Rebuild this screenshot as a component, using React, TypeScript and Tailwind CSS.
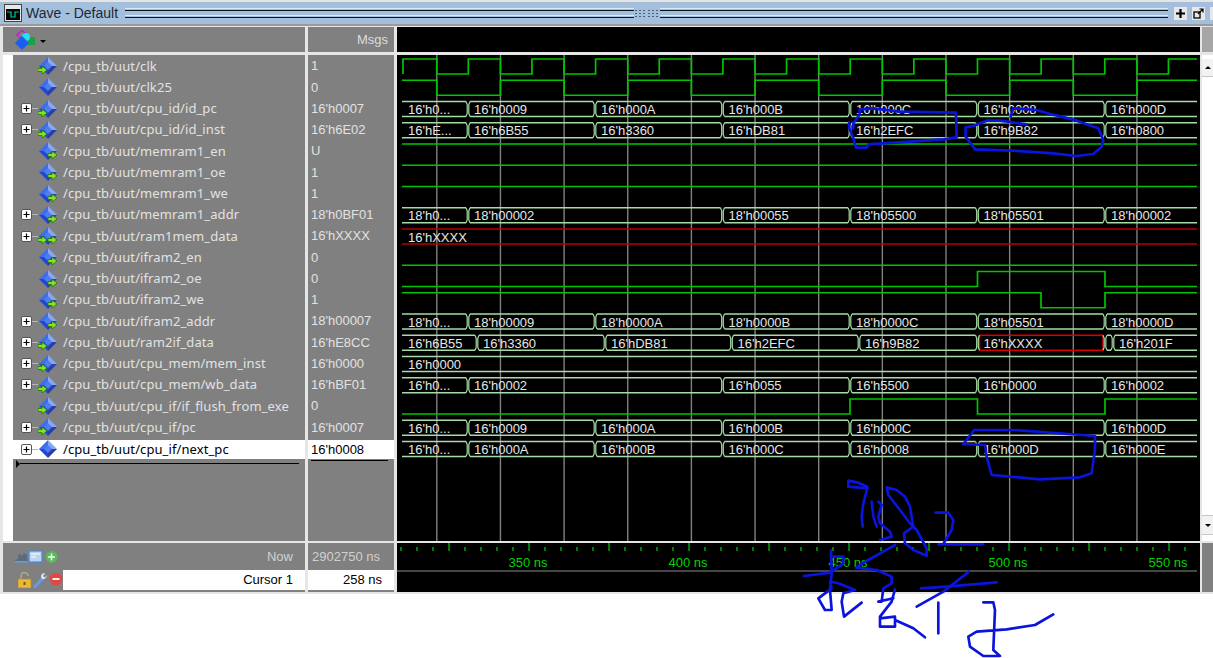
const ROW_H = 21.25;
const rowTop = (i: number) => 59 + i * ROW_H;

const GREEN = "#00c400";
const BUS = "#a6dca6";
const RED = "#b80000";

type Kind = "in" | "out" | "both" | "none";

const signals: { name: string; value: string; kind: Kind; expand?: boolean }[] = [
  { name: "/cpu_tb/uut/clk", value: "1", kind: "in" },
  { name: "/cpu_tb/uut/clk25", value: "0", kind: "none" },
  { name: "/cpu_tb/uut/cpu_id/id_pc", value: "16'h0007", kind: "in", expand: true },
  { name: "/cpu_tb/uut/cpu_id/id_inst", value: "16'h6E02", kind: "in", expand: true },
  { name: "/cpu_tb/uut/memram1_en", value: "U", kind: "out" },
  { name: "/cpu_tb/uut/memram1_oe", value: "1", kind: "out" },
  { name: "/cpu_tb/uut/memram1_we", value: "1", kind: "out" },
  { name: "/cpu_tb/uut/memram1_addr", value: "18'h0BF01", kind: "out", expand: true },
  { name: "/cpu_tb/uut/ram1mem_data", value: "16'hXXXX", kind: "both", expand: true },
  { name: "/cpu_tb/uut/ifram2_en", value: "0", kind: "out" },
  { name: "/cpu_tb/uut/ifram2_oe", value: "0", kind: "out" },
  { name: "/cpu_tb/uut/ifram2_we", value: "1", kind: "out" },
  { name: "/cpu_tb/uut/ifram2_addr", value: "18'h00007", kind: "out", expand: true },
  { name: "/cpu_tb/uut/ram2if_data", value: "16'hE8CC", kind: "in", expand: true },
  { name: "/cpu_tb/uut/cpu_mem/mem_inst", value: "16'h0000", kind: "in", expand: true },
  { name: "/cpu_tb/uut/cpu_mem/wb_data", value: "16'hBF01", kind: "in", expand: true },
  { name: "/cpu_tb/uut/cpu_if/if_flush_from_exe", value: "0", kind: "in" },
  { name: "/cpu_tb/uut/cpu_if/pc", value: "16'h0007", kind: "in", expand: true },
  { name: "/cpu_tb/uut/cpu_if/next_pc", value: "16'h0008", kind: "none", expand: true },
];

const T = [468, 595, 722.5, 850, 977.5, 1105];
const TA = [468, 722.5, 850, 977.5, 1105];

// row index, label list, transition x positions
const buses: { row: number; at: number[]; labels: string[]; color?: string }[] = [
  { row: 2, at: T, labels: ["16'h0...", "16'h0009", "16'h000A", "16'h000B", "16'h000C", "16'h0008", "16'h000D"] },
  { row: 3, at: T, labels: ["16'hE...", "16'h6B55", "16'h3360", "16'hDB81", "16'h2EFC", "16'h9B82", "16'h0800"] },
  { row: 7, at: TA, labels: ["18'h0...", "18'h00002", "18'h00055", "18'h05500", "18'h05501", "18'h00002"] },
  { row: 8, at: [], labels: ["16'hXXXX"], color: RED },
  { row: 12, at: T, labels: ["18'h0...", "18'h00009", "18'h0000A", "18'h0000B", "18'h0000C", "18'h05501", "18'h0000D"] },
  { row: 13, at: [477, 605, 731.5, 859, 977.5, 1105, 1113], labels: ["16'h6B55", "16'h3360", "16'hDB81", "16'h2EFC", "16'h9B82", "16'hXXXX", "", "16'h201F"] },
  { row: 14, at: [], labels: ["16'h0000"] },
  { row: 15, at: TA, labels: ["16'h0...", "16'h0002", "16'h0055", "16'h5500", "16'h0000", "16'h0002"] },
  { row: 17, at: [468, 595, 722.5, 850, 1105], labels: ["16'h0...", "16'h0009", "16'h000A", "16'h000B", "16'h000C", "16'h000D"] },
  { row: 18, at: T, labels: ["16'h0...", "16'h000A", "16'h000B", "16'h000C", "16'h0008", "16'h000D", "16'h000E"] },
];

const gridX = Array.from({ length: 12 }, (_, i) => 436.8 + i * 63.65);

function clockPath() {
  const top = rowTop(0);
  const low = top + 15;
  let d = `M403 ${low}V${top}`;
  for (let i = 0; i < 12; i++) {
    const fall = gridX[i];
    const rise = Math.min(fall + 31.5, 1197);
    d += `H${fall}V${low}H${rise}`;
    if (rise < 1197) d += `V${top}`;
  }
  return d + "H1197";
}

function clk25Path() {
  const top = rowTop(1);
  const low = top + 15;
  let d = `M402 ${top}`;
  let high = true;
  for (const x of gridX) {
    d += `H${x}V${high ? low : top}`;
    high = !high;
  }
  return d + "H1197";
}

function levelPath(row: number, startHigh: boolean, at: number[]) {
  const top = rowTop(row);
  const low = top + 15;
  let high = startHigh;
  let d = `M402 ${high ? top : low}`;
  for (const x of at) {
    high = !high;
    d += `H${x}V${high ? top : low}`;
  }
  return d + "H1197";
}

function Bus({ row, at, labels, color }: { row: number; at: number[]; labels: string[]; color?: string }) {
  const top = rowTop(row);
  const bot = top + 15;
  const edges = [402, ...at, 1197];
  return (
    <g>
      {labels.map((label, i) => {
        const a = edges[i] + (i === 0 ? 0 : 2);
        const b = edges[i + 1] - (i === labels.length - 1 ? 0 : 2);
        const isX = label === "16'hXXXX" && row === 13;
        const stroke = isX || color ? color ?? "#d80000" : BUS;
        return (
          <g key={i}>
            <path d={`M${a} ${top}H${b}M${a} ${bot}H${b}`} stroke={stroke} strokeWidth="1.5" fill="none" />
            {isX ? <path d={`M${a} ${top}V${bot}M${b} ${top}V${bot}`} stroke={stroke} strokeWidth="1.5" fill="none" /> : null}
            {label ? (
              <text x={edges[i] + 6} y={top + 12.5} fill="#e6e6e6" fontSize="13">
                {label}
              </text>
            ) : null}
          </g>
        );
      })}
      {at.map((x) => (
        <path
          key={x}
          d={`M${x - 2} ${top}L${x - 0.8} ${top + 3}V${bot - 3}L${x - 2} ${bot}M${x + 2} ${top}L${x + 0.8} ${top + 3}V${bot - 3}L${x + 2} ${bot}`}
          stroke={BUS}
          strokeWidth="1.2"
          fill="none"
        />
      ))}
    </g>
  );
}

function WaveCanvas() {
  return (
    <svg viewBox="397 55 803 486" className="block h-[486px] w-[803px]" style={{ fontFamily: "'Liberation Sans', sans-serif" }}>
      {gridX.map((x) => (
        <path key={x} d={`M${x} 55V541`} stroke="#808080" strokeWidth="1.4" />
      ))}
      <g fill="none" stroke={GREEN} strokeWidth="1.7">
        <path d={clockPath()} />
        <path d={clk25Path()} />
        <path d={levelPath(4, true, [])} />
        <path d={levelPath(5, true, [])} />
        <path d={levelPath(6, true, [])} />
        <path d={levelPath(9, false, [])} />
        <path d={levelPath(10, false, [977.5, 1105])} />
        <path d={levelPath(11, true, [1041, 1105])} />
        <path d={levelPath(16, false, [850, 977.5, 1105])} />
      </g>
      {buses.map((b) => (
        <Bus key={b.row} {...b} />
      ))}
    </svg>
  );
}

function Ruler() {
  const ticks = Array.from({ length: 50 }, (_, i) => 1009 + (i - 38) * 16).filter((x) => x > 400 && x < 1197);
  return (
    <svg viewBox="397 543 803 49" className="block h-[49px] w-[803px]" style={{ fontFamily: "'Liberation Sans', sans-serif" }}>
      {ticks.map((x) => {
        const major = (x - 1009) % 80 === 0;
        return <path key={x} d={`M${x} ${major ? 543 : 547}V551`} stroke="#00d000" strokeWidth="1.2" />;
      })}
      {["350 ns", "400 ns", "450 ns", "500 ns", "550 ns"].map((t, i) => (
        <text key={t} x={528 + i * 160} y={567} textAnchor="middle" fontSize="13" fill="#00d400">
          {t}
        </text>
      ))}
      <path d="M397 571H1197" stroke="#8a8a8a" strokeWidth="1" />
    </svg>
  );
}

function SignalIcon({ kind }: { kind: Kind }) {
  const arrow = (x: number) => (
    <polygon
      points={`${x},12.5 ${x + 4},12.5 ${x + 4},10 ${x + 9},14 ${x + 4},18 ${x + 4},15.5 ${x},15.5`}
      fill="#84e41e"
      stroke="#1c6a10"
      strokeWidth="0.7"
    />
  );
  return (
    <svg viewBox="0 0 20 20" className="h-5 w-5 shrink-0">
      <polygon points="10,1 10,10 1,10" fill="#3f6fe6" />
      <polygon points="10,1 19,10 10,10" fill="#86a8f4" />
      <polygon points="1,10 10,10 10,19" fill="#1e48d0" />
      <polygon points="19,10 10,10 10,19" fill="#2a3ea8" />
      <polygon points="10,6 14,10 10,14 6,10" fill="#4f7cf0" />
      {kind === "in" || kind === "both" ? arrow(0) : null}
      {kind === "out" || kind === "both" ? arrow(10) : null}
    </svg>
  );
}

function PlusBox() {
  return (
    <span className="flex h-[11px] w-[11px] shrink-0 items-center justify-center rounded-[2px] border border-[#555] bg-white text-black">
      <svg viewBox="0 0 9 9" className="h-[9px] w-[9px]">
        <path d="M1.5 4.5h6M4.5 1.5v6" stroke="#000" strokeWidth="1.2" />
      </svg>
    </span>
  );
}

function HeaderIcon() {
  return (
    <svg viewBox="0 0 22 20" className="h-5 w-[22px]">
      <polygon points="8,0 13,5 8,9 3,5" fill="none" stroke="#c020d0" strokeWidth="1.5" />
      <rect x="13" y="7" width="8" height="8" fill="#1fa040" />
      <circle cx="12" cy="7" r="4" fill="#22e0f0" />
      <polygon points="8,6 15,13 8,20 1,13" fill="#1c5cf0" />
    </svg>
  );
}

function NowIcons() {
  return (
    <svg viewBox="0 0 44 14" className="h-[14px] w-[44px]">
      <path d="M0 10l3-1V5l2-1 2 2 2-3 3 2v4l1 1v1H0z" fill="#5c6a7c" />
      <path d="M0 11h13v1.5H0z" fill="#5ba0e8" />
      <rect x="14" y="1" width="13" height="11" fill="#bcd4f0" stroke="#4a88d8" strokeWidth="1.2" />
      <path d="M16 4h9M16 7h5" stroke="#fff" strokeWidth="1.2" />
      <path d="M18 12l3 2 2-2z" fill="#4a88d8" />
      <circle cx="36.5" cy="7" r="6" fill="#5cb85c" />
      <path d="M33 7h7M36.5 3.5v7" stroke="#e8ffe8" strokeWidth="1.6" />
    </svg>
  );
}

function CursorIcons() {
  return (
    <svg viewBox="0 0 45 16" className="h-4 w-[45px]">
      <path d="M3 7V4a3.5 3.5 0 0 1 7 0" fill="none" stroke="#b8a888" strokeWidth="1.5" />
      <rect x="0" y="7" width="13" height="9" fill="#e8b838" stroke="#b88a20" strokeWidth="0.7" />
      <rect x="5.5" y="10" width="2" height="3" fill="#7a5a10" />
      <path d="M17 14.500L25 6" stroke="#6a96e4" strokeWidth="3.200" strokeLinecap="round" />
      <path d="M24 7a3.500 3.500 0 0 1 2-6l1 .5-2 2.500 2 1.500 2-2.500a4 4 0 0 1-5 4z" fill="#d4e2f6" />
      <circle cx="38" cy="7" r="6.300" fill="#e04848" />
      <path d="M34.500 7h7" stroke="#ffe8e8" strokeWidth="2" />
    </svg>
  );
}

// hand drawn annotation over the window, traced from the picture
function Ink() {
  const top = [
    "M160 385L160 370L178 345L180 328L220 325L300 335L468 338L470 412L430 418L330 425L205 433L200 443L168 443L160 415L148 385L147 367",
    "M680 373L600 362L560 362L520 378L497 382L497 410L525 448L640 452L760 460L830 468L880 462L905 440L910 420L895 385L830 362L785 350L750 342L710 330L640 325L632 350",
  ];
  const bottom = [
    "M550 72L583 30L700 30L945 48L945 90L935 160L900 172L780 178L635 165L620 110L615 75L550 72",
    "M262 205L205 200L205 182L235 188L262 200L262 205L250 250L245 290L248 320",
    "M275 245L280 290L290 320",
    "M295 245L305 255L295 290L300 310L330 335L335 350L300 360",
    "M320 202L325 225L360 270L390 310L410 330L440 385L440 407L400 390L375 370L372 340L400 320L390 260L375 230L350 210L320 202",
    "M467 278L505 278L520 300L515 330L490 372L475 373L610 373",
    "M345 375L310 395L265 420L228 443L290 450L335 470L335 490L310 505L305 545L295 545L340 535",
    "M153 392L155 460L150 510L155 570L135 570L115 535L155 505L150 485L175 490L225 510L190 520L185 545L192 590L245 548",
    "M72 468L150 458L190 430L190 410L160 410",
    "M345 508L335 545L300 590L300 620L345 620L345 590L300 595M345 600L400 625L435 652",
    "M423 505L500 500L650 487",
    "M567 455L490 515L410 560",
    "M475 548L475 640",
    "M610 547L640 547L645 570L640 690L660 708L610 708L570 680L565 650L590 635L680 628L765 615L820 583",
  ];
  return (
    <svg viewBox="0 0 1213 658" className="pointer-events-none absolute inset-0 h-[658px] w-[1213px]">
      <g fill="none" stroke="#0a14dc" strokeWidth="8" strokeLinejoin="round" strokeLinecap="round">
        <g transform="translate(800 0) scale(0.3333)">
          {top.map((d) => (
            <path key={d} d={d} />
          ))}
        </g>
        <g transform="translate(780 420) scale(0.3333)">
          {bottom.map((d) => (
            <path key={d} d={d} />
          ))}
        </g>
      </g>
    </svg>
  );
}

function TitleBar() {
  return (
    <div className="flex h-[26px] items-center border-y-2 border-t-[#e4e4e4] border-b-[#9a9a9a] bg-[#a4bfdc] pl-[4px]">
      <svg viewBox="0 0 18 18" className="h-[18px] w-[18px] shrink-0">
        <rect x="0.500" y="0.500" width="17" height="17" fill="#e8e8e8" stroke="#444" />
        <rect x="2" y="5" width="14" height="11" fill="#000" />
        <path d="M3 8h4v5h4V8h4" fill="none" stroke="#00c8a0" strokeWidth="1.2" />
      </svg>
      <span className="ml-[4px] w-[99px] shrink-0 text-[14px] leading-none text-[#1c2836]">Wave - Default</span>
      <div className="flex flex-1 items-center">
        <TitleLines />
        <div className="grid h-[9px] w-[26px] shrink-0 grid-cols-6 place-items-center">
          {Array.from({ length: 18 }, (_, i) => (
            <span key={i} className="h-px w-[2px] bg-[#4a5f80]" />
          ))}
        </div>
        <TitleLines />
      </div>
      <div className="ml-[6px] flex items-center gap-[5px]">
        <span className="flex h-[13px] w-[13px] items-center justify-center bg-[#e8e8e8]">
          <svg viewBox="0 0 11 11" className="h-[11px] w-[11px]">
            <path d="M1 5.500h9M5.500 1v9" stroke="#000" strokeWidth="2.200" />
          </svg>
        </span>
        <span className="flex h-[13px] w-[13px] items-center justify-center bg-[#e8e8e8]">
          <svg viewBox="0 0 11 11" className="h-[11px] w-[11px]">
            <rect x="1" y="4" width="6" height="6" fill="none" stroke="#000" strokeWidth="1.300" />
            <path d="M5 6l5-5M6.500 1H10v3.500" fill="none" stroke="#000" strokeWidth="1.200" />
          </svg>
        </span>
        <span className="h-[13px] w-[3px] bg-[#e8e8e8]" />
      </div>
    </div>
  );
}

function TitleLines() {
  return (
    <div className="flex h-[10px] flex-1 flex-col justify-between">
      <div className="h-[3px] border-t border-b border-t-[#d4ecf8] border-b-[#0a1420]" />
      <div className="h-[3px] border-t border-b border-t-[#d4ecf8] border-b-[#0a1420]" />
    </div>
  );
}

function SignalRows() {
  return (
    <div className="flex flex-col pt-[0.4px]">
      {signals.map((s, i) => {
        const selected = i === signals.length - 1;
        return (
          <div
            key={s.name}
            className={
              selected
                ? "mt-[2px] flex h-[19px] items-center bg-white pl-[8px] text-black"
                : "flex h-[21.25px] items-center pl-[8px] text-[#e2e2e2]"
            }
          >
            {s.expand ? (
              <>
                <PlusBox />
                <span className="h-px w-[6px] shrink-0 bg-[#b8b8b8]" />
              </>
            ) : (
              <span className="w-[17px] shrink-0" />
            )}
            <SignalIcon kind={s.kind} />
            <span className="ml-[5px] whitespace-nowrap font-['Noto_Sans',sans-serif] text-[13px] leading-[17px] tracking-[0.09px]">{s.name}</span>
          </div>
        );
      })}
      <div className="mt-px flex items-center pl-[3px]">
        <span className="h-0 w-0 border-y-[4px] border-l-[4px] border-y-transparent border-l-black" />
        <span className="h-px w-[279px] bg-black" />
      </div>
    </div>
  );
}

function ValueRows() {
  return (
    <div className="flex flex-col pt-[0.4px]">
      {signals.map((s, i) => {
        const selected = i === signals.length - 1;
        return (
          <div
            key={s.name}
            className={
              selected
                ? "mt-[2px] flex h-[19px] items-center bg-white pl-[3px] text-[13px] text-black"
                : "flex h-[21.25px] items-center pl-[3px] text-[13px] text-[#e2e2e2]"
            }
          >
            {s.value}
          </div>
        );
      })}
      <span className="ml-[3px] mt-px h-px w-[77px] bg-black" />
    </div>
  );
}

export default function App() {
  return (
    <div className="relative h-[658px] w-[1213px] overflow-hidden bg-white font-['Liberation_Sans',sans-serif]">
      <TitleBar />
      <div className="flex h-[568px] flex-col bg-[#e6e6e6] pt-px">
        {/* header */}
        <div className="flex h-[25px] gap-[3px] pl-[3px]">
          <div className="flex w-[302px] items-center gap-[4px] bg-[#808080] pl-[11px]">
            <HeaderIcon />
            <span className="mt-[3px] h-0 w-0 border-x-[3px] border-t-[3px] border-x-transparent border-t-black" />
          </div>
          <div className="w-[86px] bg-[#808080] pr-[6px] pt-[3px] text-right text-[13px] text-[#dcdcdc]">Msgs</div>
          <div className="w-[803px] bg-black" />
          <div className="ml-[-1px] flex-1 bg-[#a6a6a6]" />
        </div>

        {/* signals and waves */}
        <div className="mt-[3px] flex h-[486px] gap-[3px] pl-[3px]">
          <div className="w-[302px] bg-white pl-[10px]">
            <div className="h-full bg-[#808080]">
              <SignalRows />
            </div>
          </div>
          <div className="w-[86px] bg-[#808080]">
            <ValueRows />
          </div>
          <div className="w-[803px] bg-black">
            <WaveCanvas />
          </div>
          <div className="ml-[-1px] flex flex-1 flex-col justify-between bg-white">
            <div className="mt-[4px] flex h-[18px] items-center justify-center border-b border-[#c8c8c8] bg-[#f2f2f2]">
              <span className="h-0 w-0 border-x-[3px] border-b-[3px] border-x-transparent border-b-black" />
            </div>
            <div className="mb-[6px] flex h-[20px] items-center justify-center border-y border-[#c8c8c8] bg-[#f2f2f2]">
              <span className="h-0 w-0 border-x-[3px] border-t-[3px] border-x-transparent border-t-black" />
            </div>
          </div>
        </div>

        {/* cursors */}
        <div className="mt-[2px] flex h-[49px] gap-[3px] pl-[3px]">
          <div className="flex w-[302px] flex-col bg-[#808080]">
            <div className="flex h-[27px] items-center justify-between pl-[12px] pr-[12px] text-[13px] text-[#d0d0d0]">
              <NowIcons />
              <span>Now</span>
            </div>
            <div className="flex h-[20px] items-center">
              <div className="ml-[15px] w-[45px]">
                <CursorIcons />
              </div>
              <div className="flex h-full flex-1 items-center justify-end bg-white pr-[12px] text-[13px] text-black">Cursor 1</div>
            </div>
          </div>
          <div className="flex w-[86px] flex-col bg-[#808080]">
            <div className="flex h-[27px] items-center pl-[4px] text-[13px] text-[#d0d0d0]">2902750 ns</div>
            <div className="flex h-[20px] items-center justify-end bg-white pr-[12px] text-[13px] text-black">258 ns</div>
          </div>
          <div className="w-[803px] bg-black">
            <Ruler />
          </div>
          <div className="ml-[-1px] flex-1 bg-[#808080]" />
        </div>
      </div>
      <Ink />
    </div>
  );
}
